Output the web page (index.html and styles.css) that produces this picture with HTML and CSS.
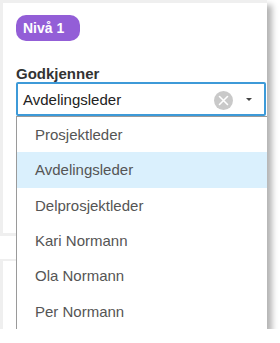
FILE: index.html
```html
<!DOCTYPE html>
<html>
<head>
<meta charset="utf-8">
<link rel="stylesheet" href="styles.css">
</head>
<body>
<div class="window">
  <div class="card">
    <span class="badge">Nivå 1</span>
    <div class="label">Godkjenner</div>
    <div class="select">
      <span class="value">Avdelingsleder</span>
      <span class="clear">
        <svg width="19" height="19" viewBox="0 0 19 19"><circle cx="9.5" cy="9.5" r="9.5" fill="#c9c9c9"/><path d="M5.5 5.5 L13.5 13.5 M13.5 5.5 L5.5 13.5" stroke="#fff" stroke-width="1.6" stroke-linecap="round"/></svg>
      </span>
      <span class="caret"></span>
    </div>
  </div>
  <div class="strip"></div>
  <div class="card card-lower"></div>
  <ul class="menu">
    <li class="item">Prosjektleder</li>
    <li class="item active">Avdelingsleder</li>
    <li class="item">Delprosjektleder</li>
    <li class="item">Kari Normann</li>
    <li class="item">Ola Normann</li>
    <li class="item">Per Normann</li>
  </ul>
</div>
</body>
</html>
```
FILE: styles.css
```css
html, body {
  margin: 0;
  padding: 0;
  background: #fff;
}
body {
  font-family: "Liberation Sans", Arial, sans-serif;
}
.window {
  position: relative;
  width: 267px;
  height: 329px;
  background: #efefef;
  overflow: hidden;
  box-shadow: 5px 5px 6px rgba(0, 0, 0, 0.3);
  padding-top: 3px;
  box-sizing: border-box;
}
.card {
  margin-left: 3px;
  background: #fff;
  height: 230px;
  box-sizing: border-box;
  padding: 12px 1px 0 13px;
}
.badge {
  display: inline-block;
  height: 26px;
  line-height: 26px;
  padding: 0 7px;
  width: 64px;
  box-sizing: border-box;
  border-radius: 10px;
  background: #935ed7;
  color: #fff;
  font-weight: bold;
  font-size: 14px;
  vertical-align: top;
}
.label {
  margin-top: 25px;
  font-size: 15px;
  font-weight: bold;
  line-height: 16px;
  color: #333;
}
.select {
  display: flex;
  align-items: center;
  height: 34px;
  box-sizing: border-box;
  border: 2px solid #3d9ad8;
  border-radius: 2px;
  padding: 0 12px 0 5px;
}
.value {
  flex: 1;
  font-size: 15px;
  color: #222;
}
.clear {
  display: flex;
  width: 19px;
  height: 19px;
  margin-right: 13px;
  margin-top: 2px;
}
.caret {
  width: 0;
  height: 0;
  border-left: 3px solid transparent;
  border-right: 3px solid transparent;
  border-top: 3px solid #444;
}
.strip {
  margin-top: 3px;
  height: 23px;
  background: #fff;
}
.card-lower {
  margin-top: 2px;
  height: 80px;
}
.menu {
  position: absolute;
  left: 16px;
  top: 116px;
  width: 260px;
  margin: 0;
  padding: 0;
  list-style: none;
  background: #fff;
  border-left: 1px solid #9a9a9a;
  border-top: 1px solid #9a9a9a;
}
.item {
  height: 35.3px;
  display: flex;
  align-items: center;
  padding-left: 18px;
  font-size: 15px;
  color: #555;
}
.item.active {
  background: #daf0fd;
}
```
